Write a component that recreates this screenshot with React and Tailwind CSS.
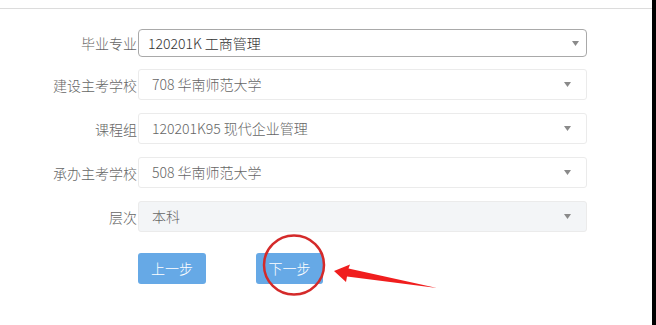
import React from "react";

const fields = [
  { label: "毕业专业", value: "120201K 工商管理", active: true },
  { label: "建设主考学校", value: "708 华南师范大学" },
  { label: "课程组", value: "120201K95 现代企业管理" },
  { label: "承办主考学校", value: "508 华南师范大学" },
  { label: "层次", value: "本科", disabled: true },
];

function Caret({ className }) {
  return (
    <svg className={className} width="7" height="5" viewBox="0 0 7 5">
      <path d="M0 0 L7 0 L3.5 5 Z" fill="#8a8a8a" />
    </svg>
  );
}

function SelectRow({ field, first }) {
  return (
    <div className={`flex items-center ${first ? "h-[28px]" : "h-[31px]"}`}>
      <div className="w-[138px] pr-[1px] text-right text-[14px] text-[#666] leading-none">
        {field.label}
      </div>
      {field.active ? (
        <div className="flex h-full w-[449px] items-center justify-between rounded-[4px] border border-[#a9a9a9] bg-white pl-[9px] pr-[7px]">
          <span className="text-[14px] text-[#333]">{field.value}</span>
          <Caret />
        </div>
      ) : (
        <div
          className={`flex h-full w-[449px] items-center justify-between rounded-[3px] border border-[#ebebeb] pl-[13px] pr-[15px] ${
            field.disabled ? "bg-[#f3f5f7]" : "bg-white"
          }`}
        >
          <span className="text-[14px] text-[#666]">{field.value}</span>
          <Caret />
        </div>
      )}
    </div>
  );
}

export default function App() {
  return (
    <div
      className="relative flex h-[325px] w-[656px] overflow-hidden bg-white font-light"
      style={{ fontFamily: '"Noto Sans CJK SC", "Noto Sans", sans-serif' }}
    >
      <div className="flex-1">
        <div className="mt-[8px] h-px bg-[#dcdcdc]" />

        <div className="mt-[20px] flex flex-col">
          {fields.map((f, i) => (
            <div key={f.label} className={i === 0 ? "" : i === 1 ? "mt-[12px]" : "mt-[13px]"}>
              <SelectRow field={f} first={i === 0} />
            </div>
          ))}
        </div>

        <div className="mt-[21px] flex pl-[138px]">
          <button className="flex h-[31px] w-[68px] items-center justify-center rounded-[3px] bg-[#66a9e6] text-[14px] text-white">
            上一步
          </button>
          <button className="ml-[50px] flex h-[31px] w-[67px] items-center justify-center rounded-[3px] bg-[#66a9e6] text-[14px] text-white">
            下一步
          </button>
        </div>
      </div>
      <div className="w-[4px] bg-black" />

      {/* annotation overlay */}
      <svg className="pointer-events-none absolute left-0 top-0" width="656" height="325" viewBox="0 0 656 325">
        <ellipse cx="294" cy="265" rx="30" ry="29.5" fill="none" stroke="#d42a2a" strokeWidth="2.5" />
        <path d="M334 271 L350 264.5 L348.5 268.5 L437 288 L347 276.5 L346 282 Z" fill="#f01e1e" />
      </svg>
    </div>
  );
}
